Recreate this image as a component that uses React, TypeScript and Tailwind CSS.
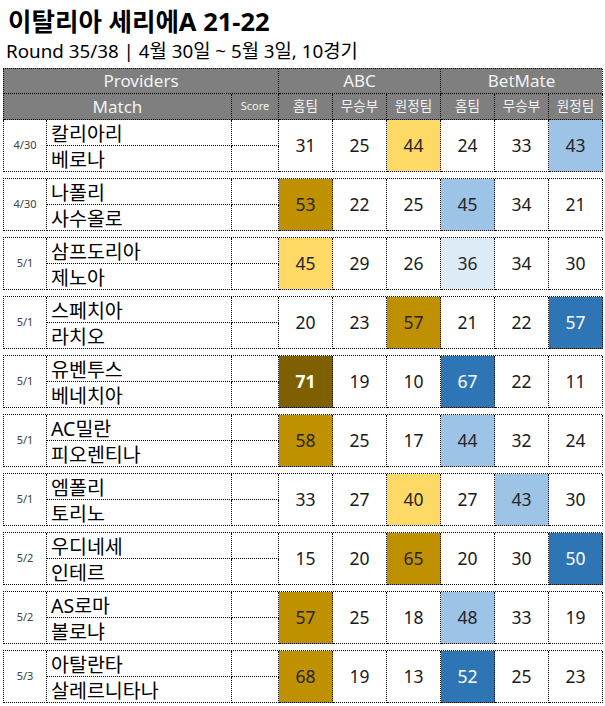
import React from "react"

type Cell = { v: number; c?: string }

type Match = {
  date: string
  home: string
  away: string
  abc: Cell[]
  bet: Cell[]
}

// fill styles, Excel-like palette
const fills: Record<string, string> = {
  g3: "bg-[#7f6000] text-white font-bold",
  g2: "bg-[#bf9000] text-[#262626]",
  g1: "bg-[#ffd966] text-[#262626]",
  b3: "bg-[#2e75b6] text-white",
  b2: "bg-[#9dc3e6] text-[#262626]",
  b1: "bg-[#ddebf7] text-[#262626]",
}

const matches: Match[] = [
  { date: "4/30", home: "칼리아리", away: "베로나", abc: [{ v: 31 }, { v: 25 }, { v: 44, c: "g1" }], bet: [{ v: 24 }, { v: 33 }, { v: 43, c: "b2" }] },
  { date: "4/30", home: "나폴리", away: "사수올로", abc: [{ v: 53, c: "g2" }, { v: 22 }, { v: 25 }], bet: [{ v: 45, c: "b2" }, { v: 34 }, { v: 21 }] },
  { date: "5/1", home: "삼프도리아", away: "제노아", abc: [{ v: 45, c: "g1" }, { v: 29 }, { v: 26 }], bet: [{ v: 36, c: "b1" }, { v: 34 }, { v: 30 }] },
  { date: "5/1", home: "스페치아", away: "라치오", abc: [{ v: 20 }, { v: 23 }, { v: 57, c: "g2" }], bet: [{ v: 21 }, { v: 22 }, { v: 57, c: "b3" }] },
  { date: "5/1", home: "유벤투스", away: "베네치아", abc: [{ v: 71, c: "g3" }, { v: 19 }, { v: 10 }], bet: [{ v: 67, c: "b3" }, { v: 22 }, { v: 11 }] },
  { date: "5/1", home: "AC밀란", away: "피오렌티나", abc: [{ v: 58, c: "g2" }, { v: 25 }, { v: 17 }], bet: [{ v: 44, c: "b2" }, { v: 32 }, { v: 24 }] },
  { date: "5/1", home: "엠폴리", away: "토리노", abc: [{ v: 33 }, { v: 27 }, { v: 40, c: "g1" }], bet: [{ v: 27 }, { v: 43, c: "b2" }, { v: 30 }] },
  { date: "5/2", home: "우디네세", away: "인테르", abc: [{ v: 15 }, { v: 20 }, { v: 65, c: "g2" }], bet: [{ v: 20 }, { v: 30 }, { v: 50, c: "b3" }] },
  { date: "5/2", home: "AS로마", away: "볼로냐", abc: [{ v: 57, c: "g2" }, { v: 25 }, { v: 18 }], bet: [{ v: 48, c: "b2" }, { v: 33 }, { v: 19 }] },
  { date: "5/3", home: "아탈란타", away: "살레르니타나", abc: [{ v: 68, c: "g2" }, { v: 19 }, { v: 13 }], bet: [{ v: 52, c: "b3" }, { v: 25 }, { v: 23 }] },
]

const font = { fontFamily: '"Noto Sans", "Noto Sans CJK KR", sans-serif' }
const cols = "grid grid-cols-[43px_185px_47px_54px_54px_54px_54px_54px_54px]"
const bd = "border-black border-dotted"

function MatchRow({ m, first }: { m: Match; first: boolean }) {
  const nums = [...m.abc, ...m.bet]
  return (
    <div className={`${cols} grid-rows-[26px_26px] border-l ${bd} ${first ? "" : "mt-[6px] border-t"}`}>
      <div className={`row-span-2 border-r border-b ${bd} flex items-center justify-center text-[11px] text-[#404040]`}>
        {m.date}
      </div>
      <div className={`border-r border-b ${bd} flex items-center pl-[4px] pt-[2px] text-[19.5px] leading-none text-black`}>{m.home}</div>
      <div className={`border-r border-b ${bd}`} />
      {nums.map((n, i) => (
        <div
          key={i}
          className={`row-span-2 border-r border-b ${bd} flex items-center justify-center text-[17.5px] ${
            n.c ? fills[n.c] : "text-[#1a1a1a]"
          }`}
          style={{ gridColumn: i + 4, gridRow: "1 / span 2" }}
        >
          {n.v}
        </div>
      ))}
      <div className={`border-r border-b ${bd} flex items-center pl-[4px] pt-[2px] text-[19.5px] leading-none text-black`} style={{ gridColumn: 2, gridRow: 2 }}>
        {m.away}
      </div>
      <div className={`border-r border-b ${bd}`} style={{ gridColumn: 3, gridRow: 2 }} />
    </div>
  )
}

export default function App() {
  const sub = ["홈팀", "무승부", "원정팀", "홈팀", "무승부", "원정팀"]
  return (
    <div className="w-[605px] h-[706px] bg-white overflow-hidden px-[3px]" style={font}>
      <div className="pl-[5px] pt-[6px] h-[38px] text-[25.5px] font-bold leading-[30px] text-black">이탈리아 세리에A 21-22</div>
      <div className="pl-[3px] h-[30px] text-[18.8px] leading-[26px] text-black">Round 35/38 | 4월 30일 ~ 5월 3일, 10경기</div>

      <div className="w-[599px]">
        {/* header */}
        <div className={`${cols} grid-rows-[25px_26px] border-l border-t ${bd} bg-[#7f7f7f] text-[#f2f2f2]`}>
          <div className={`col-span-3 border-r border-b ${bd} flex items-center justify-center text-[17px]`}>Providers</div>
          <div className={`col-span-3 border-r border-b ${bd} flex items-center justify-center text-[17px]`}>ABC</div>
          <div className={`col-span-3 border-r border-b ${bd} flex items-center justify-center text-[17px]`}>BetMate</div>
          <div className={`col-span-2 border-r border-b ${bd} flex items-center justify-center text-[17px]`}>Match</div>
          <div className={`border-r border-b ${bd} flex items-center justify-center text-[11px]`}>Score</div>
          {sub.map((s, i) => (
            <div key={i} className={`border-r border-b ${bd} flex items-center justify-center text-[13.5px]`}>
              {s}
            </div>
          ))}
        </div>

        {matches.map((m, i) => (
          <MatchRow key={i} m={m} first={i === 0} />
        ))}
      </div>
    </div>
  )
}
